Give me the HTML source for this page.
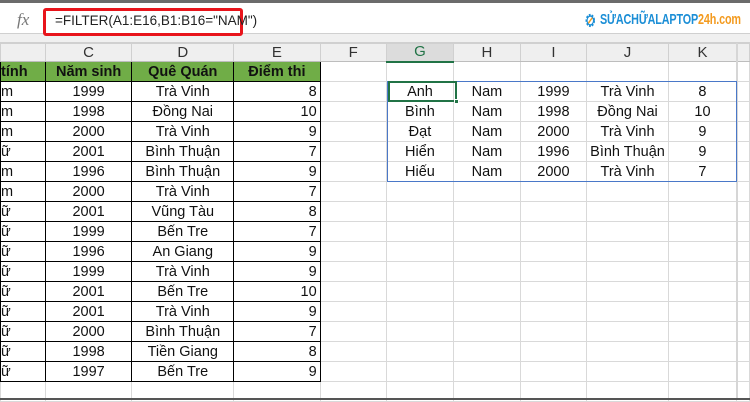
<!DOCTYPE html>
<html><head><meta charset="utf-8"><style>
*{margin:0;padding:0;box-sizing:border-box}
body{width:750px;height:400px;overflow:hidden;background:#fff;font-family:"Liberation Sans",Arial,sans-serif;position:relative}
.topline{position:absolute;left:0;top:0;width:750px;height:3px;background:#6b6b6b}
.fbar{position:absolute;left:0;top:3px;width:750px;height:31px;background:#fff;border-bottom:1px solid #d0d0d0}
.gap{position:absolute;left:0;top:34px;width:750px;height:9px;background:#f0f0f0;border-bottom:1px solid #d0d0d0}
.fx{position:absolute;left:17px;top:10px;font-family:"Liberation Serif",serif;font-style:italic;font-size:17px;color:#777}
.red{position:absolute;left:43px;top:8px;width:200px;height:28px;border:3px solid #e8141b;border-radius:3px;background:#fff}
.ftxt{position:absolute;left:55px;top:13px;font-size:13.5px;color:#222}
.logo{position:absolute;left:600px;top:11px;font-size:15px;font-weight:bold;color:#1b8ed6;transform:scaleX(0.72);transform-origin:left top;white-space:nowrap;letter-spacing:-0.2px}
.logo span{color:#f39a1e}
table{position:absolute;left:0;top:43px;border-collapse:collapse;table-layout:fixed}
td{border:1px solid #d9d9d9;height:20px;font-size:14.5px;color:#111;text-align:center;padding:0 3px;white-space:nowrap;overflow:hidden;line-height:18px}
tr.h td{background:#efefef;color:#333;font-size:15px;height:18px;line-height:16px;border-color:#d0d0d0;border-bottom:1px solid #bdbdbd}
tr.h td.g{background:#dcdcdc;color:#217346;border-bottom:2px solid #217346}
td.b{border:1px solid #000}
tr.gr td.b{background:#70ad47;font-weight:bold;color:#111}
td.r{text-align:right}
td.l{text-align:left;padding-left:0}
.spill{position:absolute;left:387px;top:81px;width:350px;height:101px;border:1px solid #4a78c8;pointer-events:none;z-index:2}
.sel{position:absolute;left:388px;top:81px;width:69px;height:21px;border:2px solid #217346;z-index:3}
.sel i{position:absolute;right:-4px;bottom:-4px;width:5px;height:5px;background:#217346;border:1px solid #fff}
.vl{position:absolute;left:736px;top:43px;width:2px;height:357px;background:#d6d6d6}
.bot{position:absolute;left:0;top:398px;width:750px;height:2px;background:#555}
</style></head><body>
<div class="topline"></div>
<div class="fbar"></div>
<div class="gap"></div>
<div class="fx">fx</div>
<div class="red"></div>
<div class="ftxt">=FILTER(A1:E16,B1:B16="NAM")</div>
<div class="logo"><svg width="17" height="17" viewBox="0 0 16 16" style="position:absolute;left:-22px;top:1px"><circle cx="8" cy="8" r="5" fill="none" stroke="#1b8ed6" stroke-width="2.4" stroke-dasharray="2.2 1.4"/><circle cx="8" cy="8" r="4.2" fill="none" stroke="#1b8ed6" stroke-width="1.4"/><path d="M5.5 10.5L10.5 5.5" stroke="#f39a1e" stroke-width="1.6"/></svg>SỬACHỮALAPTOP<span>24h.com</span></div>
<table>
<colgroup><col style="width:45px"><col style="width:87px"><col style="width:102px"><col style="width:87px"><col style="width:67px"><col style="width:68px"><col style="width:67px"><col style="width:67px"><col style="width:78px"><col style="width:69px"><col style="width:13px"></colgroup>
<tr class="h" style="height:18px"><td style="height:16px"></td><td>C</td><td>D</td><td>E</td><td>F</td><td class="g">G</td><td>H</td><td>I</td><td>J</td><td>K</td><td></td></tr>
<tr class="gr"><td class="b l">tính</td><td class="b">Năm sinh</td><td class="b">Quê Quán</td><td class="b">Điểm thi</td><td></td><td></td><td></td><td></td><td></td><td></td><td></td></tr>
<tr><td class="b l">m</td><td class="b">1999</td><td class="b">Trà Vinh</td><td class="b r">8</td><td></td><td>Anh</td><td>Nam</td><td>1999</td><td>Trà Vinh</td><td>8</td><td></td></tr>
<tr><td class="b l">m</td><td class="b">1998</td><td class="b">Đồng Nai</td><td class="b r">10</td><td></td><td>Bình</td><td>Nam</td><td>1998</td><td>Đồng Nai</td><td>10</td><td></td></tr>
<tr><td class="b l">m</td><td class="b">2000</td><td class="b">Trà Vinh</td><td class="b r">9</td><td></td><td>Đạt</td><td>Nam</td><td>2000</td><td>Trà Vinh</td><td>9</td><td></td></tr>
<tr><td class="b l">ữ</td><td class="b">2001</td><td class="b">Bình Thuận</td><td class="b r">7</td><td></td><td>Hiển</td><td>Nam</td><td>1996</td><td>Bình Thuận</td><td>9</td><td></td></tr>
<tr><td class="b l">m</td><td class="b">1996</td><td class="b">Bình Thuận</td><td class="b r">9</td><td></td><td>Hiếu</td><td>Nam</td><td>2000</td><td>Trà Vinh</td><td>7</td><td></td></tr>
<tr><td class="b l">m</td><td class="b">2000</td><td class="b">Trà Vinh</td><td class="b r">7</td><td></td><td></td><td></td><td></td><td></td><td></td><td></td></tr>
<tr><td class="b l">ữ</td><td class="b">2001</td><td class="b">Vũng Tàu</td><td class="b r">8</td><td></td><td></td><td></td><td></td><td></td><td></td><td></td></tr>
<tr><td class="b l">ữ</td><td class="b">1999</td><td class="b">Bến Tre</td><td class="b r">7</td><td></td><td></td><td></td><td></td><td></td><td></td><td></td></tr>
<tr><td class="b l">ữ</td><td class="b">1996</td><td class="b">An Giang</td><td class="b r">9</td><td></td><td></td><td></td><td></td><td></td><td></td><td></td></tr>
<tr><td class="b l">ữ</td><td class="b">1999</td><td class="b">Trà Vinh</td><td class="b r">9</td><td></td><td></td><td></td><td></td><td></td><td></td><td></td></tr>
<tr><td class="b l">ữ</td><td class="b">2001</td><td class="b">Bến Tre</td><td class="b r">10</td><td></td><td></td><td></td><td></td><td></td><td></td><td></td></tr>
<tr><td class="b l">ữ</td><td class="b">2001</td><td class="b">Trà Vinh</td><td class="b r">9</td><td></td><td></td><td></td><td></td><td></td><td></td><td></td></tr>
<tr><td class="b l">ữ</td><td class="b">2000</td><td class="b">Bình Thuận</td><td class="b r">7</td><td></td><td></td><td></td><td></td><td></td><td></td><td></td></tr>
<tr><td class="b l">ữ</td><td class="b">1998</td><td class="b">Tiền Giang</td><td class="b r">8</td><td></td><td></td><td></td><td></td><td></td><td></td><td></td></tr>
<tr><td class="b l">ữ</td><td class="b">1997</td><td class="b">Bến Tre</td><td class="b r">9</td><td></td><td></td><td></td><td></td><td></td><td></td><td></td></tr>
<tr><td></td><td></td><td></td><td></td><td></td><td></td><td></td><td></td><td></td><td></td><td></td></tr>
</table>
<div class="spill"></div>
<div class="sel"><i></i></div>
<div class="vl"></div>
<div class="bot"></div>
</body></html>
